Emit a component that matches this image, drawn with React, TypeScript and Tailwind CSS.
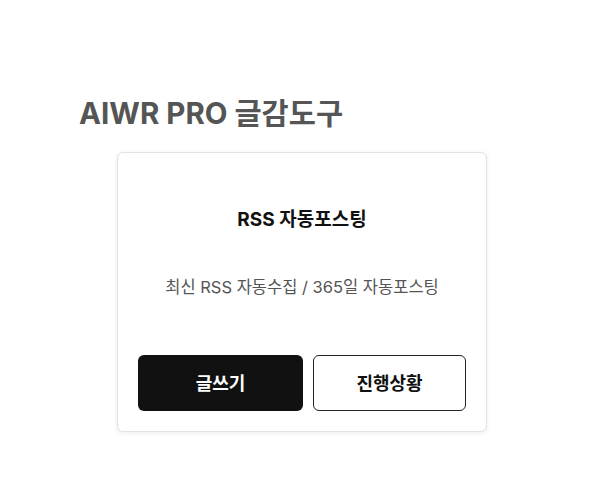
export default function App() {
  return (
    <div
      className="min-h-[504px] w-[600px] bg-white"
      style={{ fontFamily: 'Inter, "Noto Sans CJK KR", sans-serif' }}
    >
      <div className="pl-[79px] pt-[94px]">
        <h1 className="text-[29.5px] font-bold leading-[38px] text-[#555555]">
          AIWR PRO 글감도구
        </h1>
      </div>
      <div className="ml-[117px] mt-[20px] w-[370px] rounded-md border border-[#e2e2e2] bg-white px-5 pb-5 pt-[54px] shadow-[0_1px_4px_rgba(0,0,0,0.08)]">
        <div className="text-center text-[19px] font-bold leading-[26px] text-[#111111]">
          RSS 자동포스팅
        </div>
        <div className="mt-[42px] text-center text-[16.5px] leading-[24px] text-[#555555]">
          최신 RSS 자동수집 / 365일 자동포스팅
        </div>
        <div className="mt-[56px] flex gap-[10px]">
          <button className="flex h-[56px] w-[165px] items-center justify-center rounded-md bg-[#111111] text-[18px] font-bold text-white">
            글쓰기
          </button>
          <button className="flex h-[56px] flex-1 items-center justify-center rounded-md border border-[#222222] bg-white text-[18px] font-bold text-[#111111]">
            진행상황
          </button>
        </div>
      </div>
    </div>
  );
}
